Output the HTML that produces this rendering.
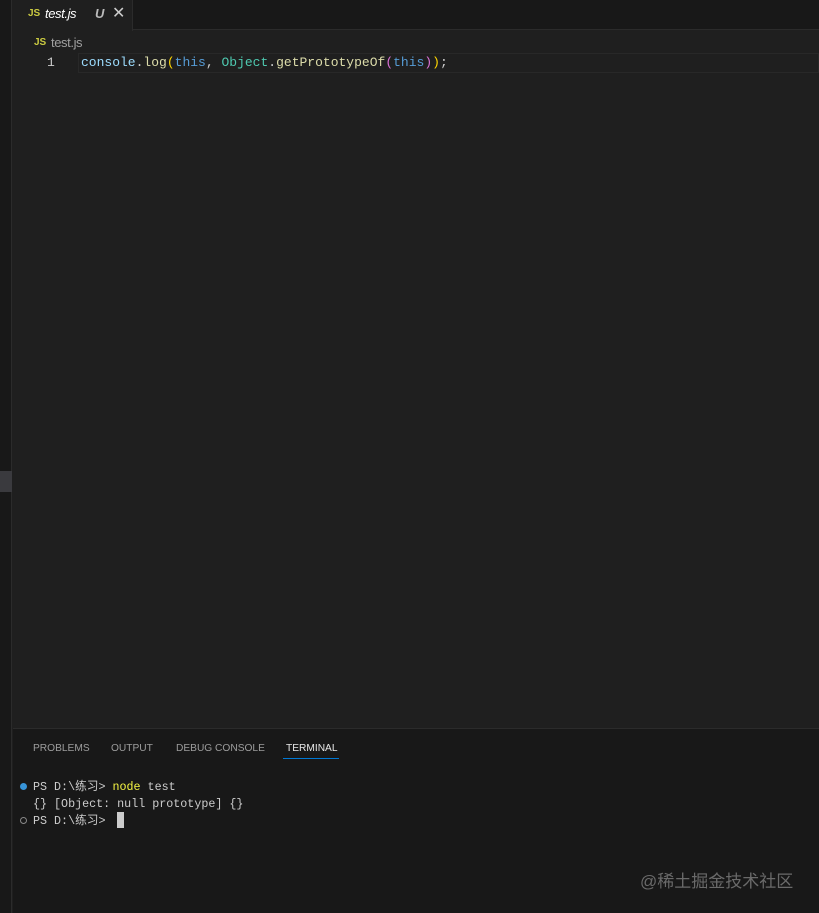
<!DOCTYPE html><html><head><style>
body{margin:0;width:819px;height:913px;background:#1f1f1f;position:relative;overflow:hidden;font-family:"Liberation Sans","Noto Sans CJK SC",sans-serif}
div{position:absolute;box-sizing:border-box}
.mono{font-family:"Liberation Mono","Noto Sans CJK SC",monospace;font-size:13px;white-space:pre}
.t{font-family:"Liberation Mono","Noto Sans CJK SC",monospace;font-size:11.7px;white-space:pre;line-height:17px}
</style></head><body>
<div style="left:0;top:0;width:12px;height:913px;background:#181818;border-right:1px solid #2b2b2b"></div>
<div style="left:0;top:471px;width:12px;height:21px;background:#3a3a3e"></div>
<div style="left:13px;top:0;width:806px;height:30px;background:#181818;border-bottom:1px solid #2b2b2b"></div>
<div style="left:13px;top:0;width:120px;height:31px;background:#1f1f1f;border-right:1px solid #2b2b2b"></div>
<div style="left:28px;top:8px;font-size:10px;font-weight:bold;color:#cbcb41">JS</div>
<div style="left:45px;top:6px;font-size:13px;font-style:italic;color:#fff;letter-spacing:-0.4px">test.js</div>
<div style="left:95px;top:6px;font-size:13px;font-style:italic;font-weight:bold;color:#bbb">U</div>
<div style="left:112px;top:3px;font-size:16px;color:#ccc">✕</div>
<div style="left:34px;top:37px;font-size:10px;font-weight:bold;color:#cbcb41">JS</div>
<div style="left:51px;top:35px;font-size:13px;color:#a0a0a0;letter-spacing:-0.4px">test.js</div>
<div style="left:78px;top:53px;width:741px;height:20px;border:1px solid #282828"></div>
<div class="mono" style="left:47px;top:55px;color:#ccc">1</div>
<div class="mono" style="left:81px;top:55px;color:#9cdcfe"><span style="color:#9cdcfe">console</span><span style="color:#ccc">.</span><span style="color:#dcdcaa">log</span><span style="color:#ffd700">(</span><span style="color:#569cd6">this</span><span style="color:#ccc">, </span><span style="color:#4ec9b0">Object</span><span style="color:#ccc">.</span><span style="color:#dcdcaa">getPrototypeOf</span><span style="color:#da70d6">(</span><span style="color:#569cd6">this</span><span style="color:#da70d6">)</span><span style="color:#ffd700">)</span><span style="color:#ccc">;</span></div>
<div style="left:13px;top:728px;width:806px;height:185px;background:#181818;border-top:1px solid #2b2b2b"></div>
<div style="left:33px;top:743px;font-size:10.2px;color:#9d9d9d">PROBLEMS</div>
<div style="left:111px;top:743px;font-size:10.2px;color:#9d9d9d">OUTPUT</div>
<div style="left:176px;top:743px;font-size:10.2px;color:#9d9d9d">DEBUG CONSOLE</div>
<div style="left:286px;top:743px;font-size:10.2px;color:#e7e7e7">TERMINAL</div>
<div style="left:283px;top:758px;width:56px;height:1px;background:#0078d4"></div>
<div style="left:20px;top:783px;width:7px;height:7px;border-radius:50%;background:#3794d8"></div>
<div class="t" style="left:33px;top:779px;color:#ccc">PS D:\练习> <span style="color:#f5f543">node</span> test</div>
<div class="t" style="left:33px;top:796px;color:#ccc">{} [Object: null prototype] {}</div>
<div style="left:20px;top:817px;width:7px;height:7px;border-radius:50%;border:1px solid #888"></div>
<div class="t" style="left:33px;top:813px;color:#ccc">PS D:\练习> </div>
<div style="left:117px;top:812px;width:7px;height:16px;background:#ccc"></div>
<div style="left:640px;top:867px;font-size:17px;color:#6a6a6a">@稀土掘金技术社区</div>
</body></html>
